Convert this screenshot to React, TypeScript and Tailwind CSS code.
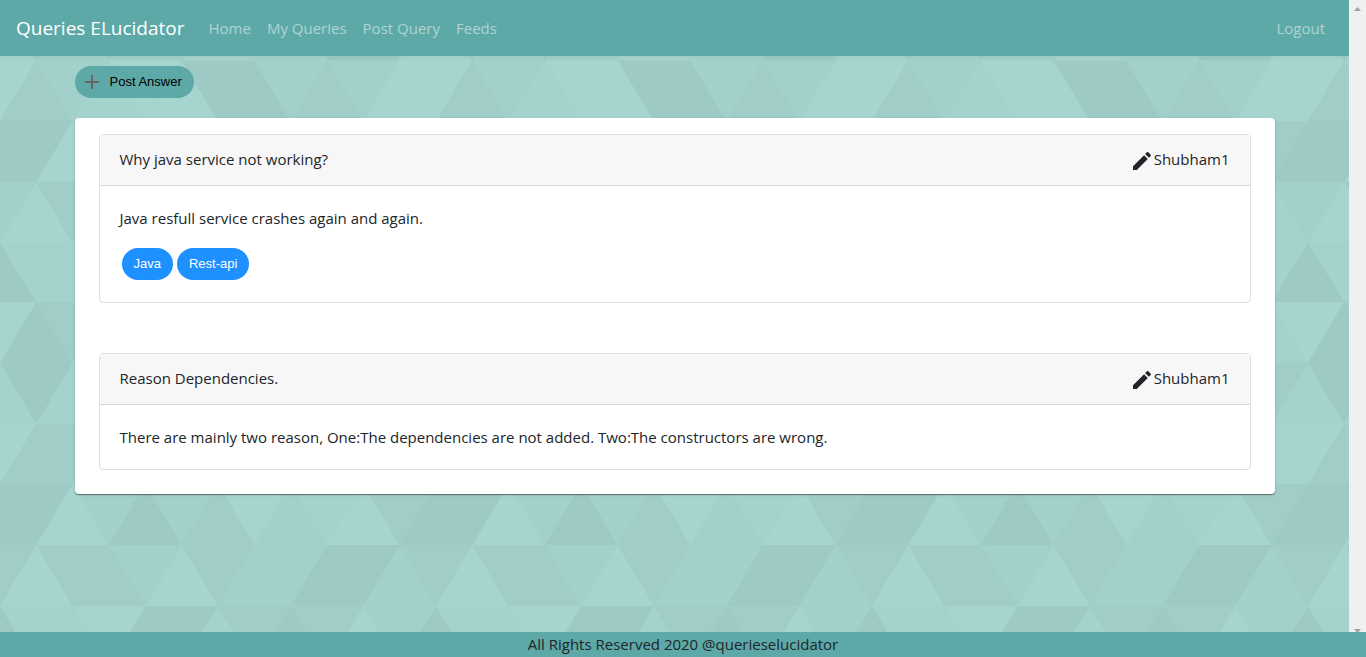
import React from "react";
import { MdAdd, MdEdit } from "react-icons/md";

const SHADES = ["#9dcac5", "#a0cdc8", "#a2d0ca", "#a4d2cc", "#a6d4ce"];
const TILE = 436;
const SIDE = TILE / 6;
const ROWS = [0, 60.5, 121, 182, 243, 302, 363, 424, 484, 545, 606, 667];

// Each row lists twelve shades: down-facing and up-facing triangles in turn.
const MOSAIC: number[][] = [
  [2, 4, 1, 3, 3, 5, 4, 4, 2, 1, 3, 5],
  [5, 2, 3, 4, 5, 5, 1, 1, 3, 2, 3, 5],
  [1, 5, 2, 3, 4, 2, 5, 4, 1, 3, 2, 1],
  [3, 5, 2, 3, 4, 5, 2, 4, 1, 3, 2, 4],
  [4, 4, 3, 1, 2, 4, 5, 3, 2, 4, 4, 1],
  [5, 1, 2, 4, 3, 5, 2, 1, 4, 3, 1, 4],
  [1, 4, 3, 2, 5, 4, 1, 3, 4, 2, 2, 4],
  [5, 2, 2, 4, 3, 1, 5, 4, 2, 3, 2, 5],
  [1, 5, 3, 1, 3, 2, 5, 3, 4, 5, 2, 1],
  [2, 5, 2, 2, 3, 5, 2, 3, 3, 1, 1, 3],
  [4, 4, 5, 1, 1, 4, 2, 1, 2, 5, 3, 1],
];

function Mosaic() {
  return (
    <svg className="absolute inset-0 h-full w-full" aria-hidden="true">
      <defs>
        <pattern id="mosaic" width={TILE} height={667} patternUnits="userSpaceOnUse">
          <rect width={TILE} height={667} fill="#a2d0ca" />
          {MOSAIC.map((shades, row) => {
            const top = ROWS[row];
            const bottom = ROWS[row + 1];
            const start = row % 2 === 0 ? 0 : -SIDE / 2;
            return [-1, 0, 1, 2, 3, 4, 5, 6].map((column) => {
              const x = start + column * SIDE;
              const index = ((column + 6) % 6) * 2;
              return (
                <g key={`${row}-${column}`}>
                  <path
                    d={`M${x} ${top}H${x + SIDE}L${x + SIDE / 2} ${bottom}Z`}
                    fill={SHADES[shades[index] - 1]}
                  />
                  <path
                    d={`M${x + SIDE} ${top}L${x + SIDE * 1.5} ${bottom}H${x + SIDE / 2}Z`}
                    fill={SHADES[shades[index + 1] - 1]}
                  />
                </g>
              );
            });
          })}
        </pattern>
      </defs>
      <rect width="100%" height="100%" fill="url(#mosaic)" />
    </svg>
  );
}

interface PostProps {
  title: string;
  author: string;
  text: string;
  tags?: string[];
}

function Post({ title, author, text, tags = [] }: PostProps) {
  return (
    <article className="rounded border border-[#dfdfdf] bg-white">
      <header className="flex items-start justify-between border-b border-[#d8d8d8] bg-[#f7f7f7] px-5 py-3">
        <h2>{title}</h2>
        <span className="flex items-start">
          <MdEdit className="mt-[2px] size-6" />
          {author}
        </span>
      </header>
      <div className="p-5">
        <p>{text}</p>
        {tags.length > 0 && (
          <div className="mt-4 flex gap-1 p-[2px]">
            {tags.map((tag) => (
              <button
                key={tag}
                type="button"
                className="h-8 rounded-full bg-[#1e90ff] px-3 font-['Liberation_Sans',sans-serif] text-[13px] text-white"
              >
                {tag}
              </button>
            ))}
          </div>
        )}
      </div>
    </article>
  );
}

const LINKS = ["Home", "My Queries", "Post Query", "Feeds"];

export default function App() {
  return (
    <div className="flex h-screen flex-col font-['Open_Sans','Noto_Sans',sans-serif] text-[15px] leading-6 text-[#212529]">
      <div className="flex min-h-0 flex-1">
        <div className="relative flex min-w-0 flex-1 flex-col overflow-hidden">
          <Mosaic />
          <nav className="relative flex h-14 shrink-0 items-center bg-[#5da9a7] px-4 text-white/50 shadow-[0_2px_4px_rgba(0,0,0,0.04)]">
            <a href="#" className="mr-4 text-[19px] text-white">
              Queries ELucidator
            </a>
            {LINKS.map((link) => (
              <a key={link} href="#" className="px-2">
                {link}
              </a>
            ))}
            <a href="#" className="ml-auto px-2">
              Logout
            </a>
          </nav>
          <main className="relative mx-auto w-full max-w-[1200px] pt-[10px]">
            <button
              type="button"
              className="flex h-8 items-center gap-[6px] rounded-full bg-[#5da9a7] pr-3 pl-[5px] font-['Liberation_Sans',sans-serif] text-[13px] text-black"
            >
              <MdAdd className="size-6 text-[#666]" />
              Post Answer
            </button>
            <section className="mt-5 flex flex-col gap-[50px] rounded bg-white px-6 pt-4 pb-6 shadow-[0_1px_1px_rgba(0,0,0,0.4),0_1px_3px_rgba(0,0,0,0.12)]">
              <Post
                title="Why java service not working?"
                author="Shubham1"
                text="Java resfull service crashes again and again."
                tags={["Java", "Rest-api"]}
              />
              <Post
                title="Reason Dependencies."
                author="Shubham1"
                text="There are mainly two reason, One:The dependencies are not added. Two:The constructors are wrong."
              />
            </section>
          </main>
        </div>
        <div className="flex w-[17px] shrink-0 flex-col items-center justify-between bg-[#f0f0f0] pt-[7px]" aria-hidden="true">
          <svg width="7" height="4" viewBox="0 0 7 4" fill="#a3a3a3">
            <path d="M0 4L3.5 0L7 4Z" />
          </svg>
          <svg width="7" height="3" viewBox="0 0 7 3" fill="#a3a3a3">
            <path d="M0 0H7L4.5 3H2.5Z" />
          </svg>
        </div>
      </div>
      <footer className="flex h-[25px] shrink-0 items-start justify-center bg-[#5da9a7]">
        All Rights Reserved 2020 @querieselucidator
      </footer>
    </div>
  );
}
